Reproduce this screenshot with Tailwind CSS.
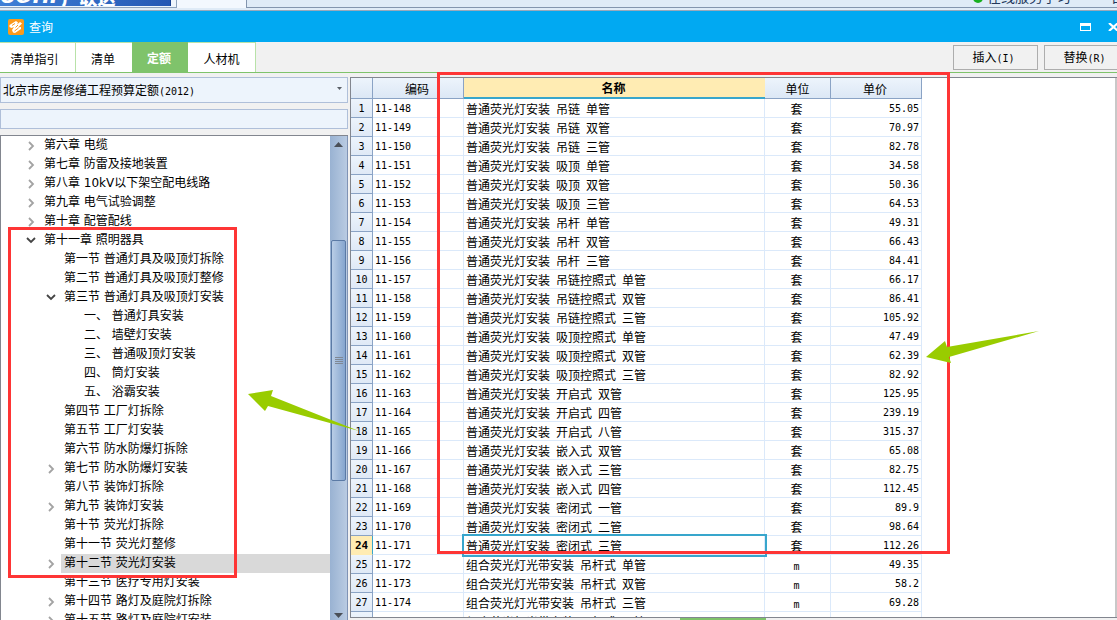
<!DOCTYPE html>
<html lang="zh-CN">
<head>
<meta charset="utf-8">
<title>查询</title>
<script src="https://cdn.jsdelivr.net/npm/@tailwindcss/browser@4"></script>
</head>
<body class="relative flex h-screen flex-col overflow-hidden bg-[#f1f1f1] font-['Noto_Sans_CJK_SC',sans-serif] text-xs text-black">

<div class="relative flex h-[11px] shrink-0 items-start justify-between overflow-hidden border-b border-[#9aa9bb] bg-[#dfebf7]">
  <div class="flex h-[8px] w-[177px] overflow-hidden border-r border-b border-[#8ea3bd] bg-[#eef5fc]">
    <div class="flex h-[6px] w-[171px] items-end overflow-hidden border-r border-[#173f8f] bg-linear-to-r from-[#3f7fd6] to-[#2458b4] leading-none font-black text-white">
      <span class="-mb-0.5 font-['Liberation_Sans',sans-serif] text-[28px] italic">con.</span>
      <span class="pl-1 text-lg leading-none">广联达</span>
    </div>
  </div>
  <div class="h-2 w-[69px] shrink-0 bg-[#f3f8fe]"></div>
  <div class="flex h-2 flex-1 items-end justify-end gap-1 overflow-hidden border-b border-l border-[#8395ae] pb-1">
    <span class="size-2.5 shrink-0 rounded-full bg-[#18b020]"></span>
    <span class="text-sm leading-none whitespace-nowrap text-[#23395d]">在线服务学习</span>
    <span class="ml-9 w-1.5 shrink-0 text-sm leading-none text-[#23395d]">自</span>
  </div>
</div>

<header class="flex h-[31px] shrink-0 items-center bg-[#01a9f2] pl-2 text-white">
  <svg class="size-4" viewBox="0 0 16 16" aria-hidden="true">
    <rect width="16" height="16" rx="2" fill="#fb9a1c"/>
    <path d="M1.500 6 8 2l2 1.500-1 2 3-2.500 2 1.500-4 4 3-.5v2l-6 4-2-.5-1-2.500 2-3-2.500 1-2-1z" fill="#fff"/>
    <path d="m4 6.500 3-2M7.500 8.500 10 6M6.500 12l4-3" stroke="#fb9a1c" stroke-width="1" fill="none"/>
  </svg>
  <h1 class="flex-1 pl-[5px]">查询</h1>
  <button class="mr-[17px]" aria-label="最大化"><svg class="h-2 w-[11px]" viewBox="0 0 11 8"><path d="M0 0h11v8H0zM1 3v4h9V3z" fill="#fff" fill-rule="evenodd"/></svg></button>
  <button class="-mr-0.5" aria-label="关闭"><svg class="h-2 w-[11px]" viewBox="0 0 11 8"><path d="m1 0 9 8M10 0 1 8" stroke="#fff" stroke-width="2.200"/></svg></button>
</header>

<div class="flex h-[31px] shrink-0 items-stretch overflow-hidden border-b border-[#7fc36b]">
  <nav class="flex flex-1 items-stretch leading-[32px]">
    <button class="w-[76px] border-t border-r border-[#b8e2a8] bg-white pr-1.5">清单指引</button>
    <button class="w-14 border-t border-[#b8e2a8] bg-white pr-0.5">清单</button>
    <button class="w-14 bg-[#7fc36b] pr-0.5 font-bold text-white">定额</button>
    <button class="w-[68px] border-t border-r border-[#b8e2a8] bg-white">人材机</button>
  </nav>
  <button class="mt-[3px] mr-1.5 h-[25px] w-[85px] border border-[#adadad] bg-[#f1f1f1] pr-1">插入<span class="font-['DejaVu_Sans_Mono',monospace] text-[10px]">(I)</span></button>
  <button class="mt-[3px] -mr-2 h-[25px] w-[81px] border border-[#adadad] bg-[#f1f1f1]">替换<span class="font-['DejaVu_Sans_Mono',monospace] text-[10px]">(R)</span></button>
</div>

<main class="flex min-h-0 flex-1">
  <aside class="flex w-[348px] shrink-0 flex-col pt-1">
    <button class="flex h-[26px] shrink-0 items-center justify-between border border-[#afbfd9] bg-[#edf4fc] pr-[5px] pl-0.5" aria-haspopup="listbox">
      <span>北京市房屋修缮工程预算定额<span class="font-['DejaVu_Sans_Mono',monospace] text-[10px]">(2012)</span></span>
      <svg class="mb-1 h-[3px] w-[5px]" viewBox="0 0 5 3"><path d="M0 0h5L2.500 3z" fill="#5b6068"/></svg>
    </button>
    <input aria-label="查找" class="mt-1.5 h-5 shrink-0 border border-[#afbfd9] bg-[#edf4fc] px-1">
    <div class="mt-1.5 flex min-h-0 flex-1 border-t border-l border-[#82868f] bg-white">
      <ul id="tree" class="min-w-0 flex-1 overflow-hidden font-['DejaVu_Sans','Noto_Sans_CJK_SC',sans-serif]"></ul>
      <div class="flex w-[18px] shrink-0 flex-col items-center border-r border-[#7f93b5] bg-linear-to-r from-[#99b2d2] to-[#b9cbe2]" aria-hidden="true">
        <svg class="mt-1.5 h-[5px] w-[9px] shrink-0" viewBox="0 0 9 5"><path d="M4.500 0 9 5H0z" fill="#4a4f57"/></svg>
        <div class="mt-[93px] flex h-[241px] w-[15px] shrink-0 items-center justify-center rounded-xs border border-[#5b7aa5] bg-linear-to-r from-[#b9cde6] to-[#85a5ce]">
          <svg class="size-2" viewBox="0 0 8 8"><path d="M0 .5h8M0 2.500h8M0 4.500h8M0 6.500h8" stroke="#7f8894"/></svg>
        </div>
        <svg class="mt-auto mb-0.5 h-[5px] w-[9px] shrink-0" viewBox="0 0 9 5"><path d="M0 0h9L4.500 5z" fill="#4a4f57"/></svg>
      </div>
    </div>
  </aside>

  <section class="ml-0.5 flex min-w-0 flex-1 flex-col pt-1">
    <div class="flex min-h-0 flex-1 overflow-hidden border-y border-l border-[#82868f] bg-white">
      <div class="min-w-0 flex-1 overflow-hidden">
        <table class="w-[571px] table-fixed border-separate border-spacing-0 leading-[18px]">
          <colgroup><col class="w-[22px]"><col class="w-[91px]"><col class="w-[301px]"><col class="w-[66px]"><col class="w-[91px]"></colgroup>
          <thead>
            <tr class="h-[21px] bg-linear-to-b from-[#edf4fc] to-[#dbe7f5]">
              <th class="border-r border-b border-[#8aa3c5] p-0"></th>
              <th class="border-r border-b border-[#8aa3c5] pt-0.5 pr-0.5 pb-0 pl-0 font-normal">编码</th>
              <th class="border-b-2 border-[#38a6cc] bg-[#ffecb3] pt-px pr-0.5 pb-0 pl-0 font-bold">名称</th>
              <th class="border-r border-b border-[#8aa3c5] px-0 pt-0.5 pb-0 font-normal">单位</th>
              <th class="border-r border-b border-[#8aa3c5] pt-0.5 pr-0.5 pb-0 pl-0 font-normal">单价</th>
            </tr>
          </thead>
          <tbody id="rows"></tbody>
        </table>
      </div>
      <div class="w-0.5 shrink-0 bg-[#c8c8c8]"></div>
    </div>
    <div class="h-0.5 shrink-0 pl-[330px]"><div class="h-full w-[86px] bg-[#7fc36b]"></div></div>
  </section>
</main>

<div class="pointer-events-none absolute top-[227px] left-2 h-[351px] w-[229px] border-3 border-[#fe3535]"></div>
<div class="pointer-events-none absolute top-[72px] left-[437px] h-[482px] w-[513px] border-3 border-[#fe3535]"></div>
<svg class="pointer-events-none absolute top-[388px] left-[246px] h-12 w-[116px]" viewBox="246 388 116 48" aria-hidden="true"><path d="m248 394 25-4-2 6 88 35-91-25-3 5Z" fill="#99cc00"/></svg>
<svg class="pointer-events-none absolute top-[328px] left-[924px] h-9 w-[116px]" viewBox="924 328 116 36" aria-hidden="true"><path d="m926 357 19-16 2 6 92-16-90 26 2 6Z" fill="#99cc00"/></svg>

<script>
const tree = [
  [0, 'closed', '第六章 电缆'], [0, 'closed', '第七章 防雷及接地装置'], [0, 'closed', '第八章 10kV以下架空配电线路'],
  [0, 'closed', '第九章 电气试验调整'], [0, 'closed', '第十章 配管配线'], [0, 'open', '第十一章 照明器具'],
  [1, '', '第一节 普通灯具及吸顶灯拆除'], [1, '', '第二节 普通灯具及吸顶灯整修'], [1, 'open', '第三节 普通灯具及吸顶灯安装'],
  [2, '', '一、 普通灯具安装'], [2, '', '二、 墙壁灯安装'], [2, '', '三、 普通吸顶灯安装'], [2, '', '四、 筒灯安装'], [2, '', '五、 浴霸安装'],
  [1, '', '第四节 工厂灯拆除'], [1, '', '第五节 工厂灯安装'], [1, '', '第六节 防水防爆灯拆除'], [1, 'closed', '第七节 防水防爆灯安装'],
  [1, '', '第八节 装饰灯拆除'], [1, 'closed', '第九节 装饰灯安装'], [1, '', '第十节 荧光灯拆除'], [1, '', '第十一节 荧光灯整修'],
  [1, 'closed', '第十二节 荧光灯安装'], [1, '', '第十三节 医疗专用灯安装'], [1, 'closed', '第十四节 路灯及庭院灯拆除'], [1, 'closed', '第十五节 路灯及庭院灯安装']
];
const indent = ['pl-[23px]', 'pl-[43px]', 'pl-[63px]'];
const arrows = {
  closed: '<svg class="size-3" viewBox="0 0 12 12"><path d="m5 2 4 4-4 4" fill="none" stroke="#a3a3a3" stroke-width="1.800"/></svg>',
  open: '<svg class="size-3" viewBox="0 0 12 12"><path d="m3 3 4 4 4-4" fill="none" stroke="#444" stroke-width="1.800"/></svg>',
  '': ''
};
document.getElementById('tree').innerHTML = tree.map(([level, state, label]) => `
  <li class="flex h-[19px] items-center ${indent[level]}">
    <span class="w-[17px] shrink-0">${arrows[state]}</span>
    <span class="h-[19px] flex-1 pl-[3px] leading-[19px] whitespace-nowrap ${label.startsWith('第十二节') ? 'bg-[#d9d9d9]' : ''}">${label}</span>
  </li>`).join('');

const p = '普通荧光灯安装 ', z = '组合荧光灯光带安装 吊杆式 ';
const items = [
  [p + '吊链 单管', '55.05'], [p + '吊链 双管', '70.97'], [p + '吊链 三管', '82.78'],
  [p + '吸顶 单管', '34.58'], [p + '吸顶 双管', '50.36'], [p + '吸顶 三管', '64.53'],
  [p + '吊杆 单管', '49.31'], [p + '吊杆 双管', '66.43'], [p + '吊杆 三管', '84.41'],
  [p + '吊链控照式 单管', '66.17'], [p + '吊链控照式 双管', '86.41'], [p + '吊链控照式 三管', '105.92'],
  [p + '吸顶控照式 单管', '47.49'], [p + '吸顶控照式 双管', '62.39'], [p + '吸顶控照式 三管', '82.92'],
  [p + '开启式 双管', '125.95'], [p + '开启式 四管', '239.19'], [p + '开启式 八管', '315.37'],
  [p + '嵌入式 双管', '65.08'], [p + '嵌入式 三管', '82.75'], [p + '嵌入式 四管', '112.45'],
  [p + '密闭式 一管', '89.9'], [p + '密闭式 二管', '98.64'], [p + '密闭式 三管', '112.26'],
  [z + '单管', '49.35'], [z + '双管', '58.2'], [z + '三管', '69.28'], [z + '四管', '80.52']
];
const space = `<span class="font-['DejaVu_Sans_Mono',monospace] text-[10px] leading-none"> </span>`;
document.getElementById('rows').innerHTML = items.map(([name, price], i) => {
  const current = i === 23;
  const unit = i < 24 ? '套' : `<span class="font-['DejaVu_Sans_Mono',monospace] text-[10px] leading-none">m</span>`;
  return `<tr class="h-[19px] leading-4">
    <th scope="row" class="border-r border-b px-0 pt-0.5 pb-0 font-['DejaVu_Sans_Mono',monospace] ${current ? 'border-[#38a6cc] border-b-[#ffecb3] bg-[#ffecb3] text-[11px] font-bold' : 'border-[#8aa3c5] bg-linear-to-b from-[#edf4fc] to-[#dfe9f6] text-[10px] font-normal'}">${i + 1}</th>
    <td class="border-r border-b border-[#dbe9fa] pt-0.5 pr-0 pb-0 pl-0.5 font-['DejaVu_Sans_Mono',monospace] text-[10px]">11-${148 + i}</td>
    <td class="border-r border-b border-[#dbe9fa] pt-0.5 pr-0 pb-0 pl-0.5 whitespace-nowrap ${current ? 'outline-2 outline-[#38a6cc]' : ''}">${name.replaceAll(' ', space)}</td>
    <td class="border-r border-b border-[#dbe9fa] pt-0.5 pr-0.5 pb-0 pl-0 text-center">${unit}</td>
    <td class="border-r border-b border-[#dbe9fa] pt-0.5 pr-0.5 pb-0 pl-0 text-right font-['DejaVu_Sans_Mono',monospace] text-[10px]">${price}</td>
  </tr>`;
}).join('');
</script>
</body>
</html>
